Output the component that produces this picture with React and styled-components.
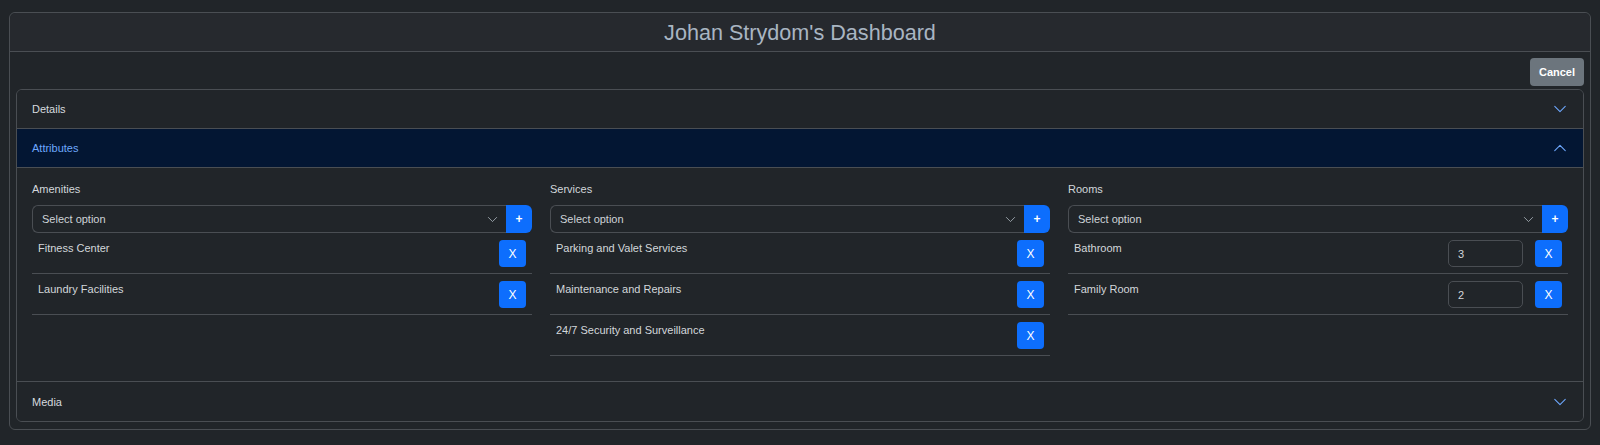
import React from "react";
import styled, { createGlobalStyle } from "styled-components";

const GlobalStyle = createGlobalStyle`
  html, body {
    margin: 0;
    padding: 0;
    background: #212529;
    font-family: "Liberation Sans", Arial, sans-serif;
    color: #dee2e6;
  }
  * { box-sizing: border-box; }
`;

const amenities = ["Fitness Center", "Laundry Facilities"];
const services = [
  "Parking and Valet Services",
  "Maintenance and Repairs",
  "24/7 Security and Surveillance",
];
const rooms = [
  { name: "Bathroom", count: 3 },
  { name: "Family Room", count: 2 },
];

const Chevron = ({ up, color = "#6ea8fe", size = 14 }) => (
  <svg width={size} height={size} viewBox="0 0 16 16" fill="none">
    <path
      d={up ? "M2 11L8 5L14 11" : "M2 5L8 11L14 5"}
      stroke={color}
      strokeWidth="1.2"
      strokeLinecap="round"
      strokeLinejoin="round"
    />
  </svg>
);

const Attribute = ({ title, children }) => (
  <Column>
    <Label>{title}</Label>
    <SelectGroup>
      <FakeSelect>
        <span>Select option</span>
        <Chevron color="#adb5bd" size={11} />
      </FakeSelect>
      <AddButton>+</AddButton>
    </SelectGroup>
    {children}
  </Column>
);

export default function App() {
  return (
    <>
      <GlobalStyle />
      <Page>
        <Card>
          <CardHeader>Johan Strydom's Dashboard</CardHeader>
          <CardBody>
            <Toolbar>
              <CancelButton>Cancel</CancelButton>
            </Toolbar>
            <Accordion>
              <AccordionHeader>
                Details
                <Chevron />
              </AccordionHeader>
              <AccordionHeader active>
                Attributes
                <Chevron up />
              </AccordionHeader>
              <AccordionBody>
                <Attribute title="Amenities">
                  {amenities.map((a) => (
                    <ItemRow key={a}>
                      <ItemName>{a}</ItemName>
                      <RemoveButton>X</RemoveButton>
                    </ItemRow>
                  ))}
                </Attribute>
                <Attribute title="Services">
                  {services.map((s) => (
                    <ItemRow key={s}>
                      <ItemName>{s}</ItemName>
                      <RemoveButton>X</RemoveButton>
                    </ItemRow>
                  ))}
                </Attribute>
                <Attribute title="Rooms">
                  {rooms.map((r) => (
                    <ItemRow key={r.name}>
                      <ItemName>{r.name}</ItemName>
                      <CountInput readOnly value={r.count} />
                      <RemoveButton>X</RemoveButton>
                    </ItemRow>
                  ))}
                </Attribute>
              </AccordionBody>
              <AccordionHeader last>
                Media
                <Chevron />
              </AccordionHeader>
            </Accordion>
          </CardBody>
        </Card>
      </Page>
    </>
  );
}

const Page = styled.div`
  padding: 12px 9px 16px;
  height: 445px;
`;

const Card = styled.div`
  border: 1px solid #4a4e53;
  border-radius: 6px;
  background: #212529;
`;

const CardHeader = styled.div`
  height: 39px;
  border-bottom: 1px solid #4a4e53;
  background: #26292e;
  border-radius: 6px 6px 0 0;
  display: flex;
  align-items: center;
  justify-content: center;
  font-size: 21.6px;
  color: #a9b5c2;
  padding-top: 2px;
`;

const CardBody = styled.div`
  padding: 6px 6px 7px;
`;

const Toolbar = styled.div`
  display: flex;
  justify-content: flex-end;
  margin-bottom: 3px;
`;

const CancelButton = styled.button`
  width: 54px;
  height: 28px;
  border: none;
  border-radius: 4px;
  background: #6c757d;
  color: #fff;
  font-family: inherit;
  font-weight: bold;
  font-size: 11px;
  padding: 0;
`;

const Accordion = styled.div`
  border: 1px solid #4a4e53;
  border-radius: 6px;
  overflow: hidden;
`;

const AccordionHeader = styled.div`
  height: 39px;
  display: flex;
  align-items: center;
  justify-content: space-between;
  padding: 0 16px 0 15px;
  font-size: 11px;
  color: ${(p) => (p.active ? "#6ea8fe" : "#d6dadf")};
  background: ${(p) => (p.active ? "#031633" : "#212529")};
  border-bottom: ${(p) => (p.last ? "none" : "1px solid #4a4e53")};
`;

const AccordionBody = styled.div`
  display: grid;
  grid-template-columns: repeat(3, 1fr);
  column-gap: 18px;
  align-items: start;
  padding: 12px 15px 25px;
  border-bottom: 1px solid #4a4e53;
  height: 214px;
`;

const Column = styled.div`
  display: flex;
  flex-direction: column;
`;

const Label = styled.div`
  font-size: 11px;
  line-height: 18px;
  color: #d3d7db;
  margin-bottom: 7px;
`;

const SelectGroup = styled.div`
  display: flex;
  height: 28px;
`;

const FakeSelect = styled.div`
  flex: 1;
  display: flex;
  align-items: center;
  justify-content: space-between;
  padding: 0 8px 0 9px;
  border: 1px solid #4a4e53;
  border-right: none;
  border-radius: 6px 0 0 6px;
  font-size: 11px;
  color: #cfd3d8;
`;

const AddButton = styled.button`
  width: 26px;
  border: none;
  border-radius: 0 6px 6px 0;
  background: #0d6efd;
  color: #fff;
  font-family: inherit;
  font-weight: bold;
  font-size: 12px;
  padding: 0;
`;

const ItemRow = styled.div`
  display: flex;
  align-items: flex-start;
  padding: 7px 6px 6px 0;
  border-bottom: 1px solid #4a4e53;
`;

const ItemName = styled.div`
  flex: 1;
  font-size: 11px;
  line-height: 16px;
  padding-left: 6px;
  color: #d3d7db;
`;

const CountInput = styled.input`
  width: 75px;
  height: 27px;
  margin-right: 12px;
  background: transparent;
  border: 1px solid #4a4e53;
  border-radius: 5px;
  color: #d3d7db;
  font-family: inherit;
  font-size: 11px;
  padding: 0 9px;
  outline: none;
`;

const RemoveButton = styled.button`
  width: 27px;
  height: 27px;
  border: none;
  border-radius: 4px;
  background: #0d6efd;
  color: #fff;
  font-family: inherit;
  font-size: 12px;
  padding: 0;
`;
